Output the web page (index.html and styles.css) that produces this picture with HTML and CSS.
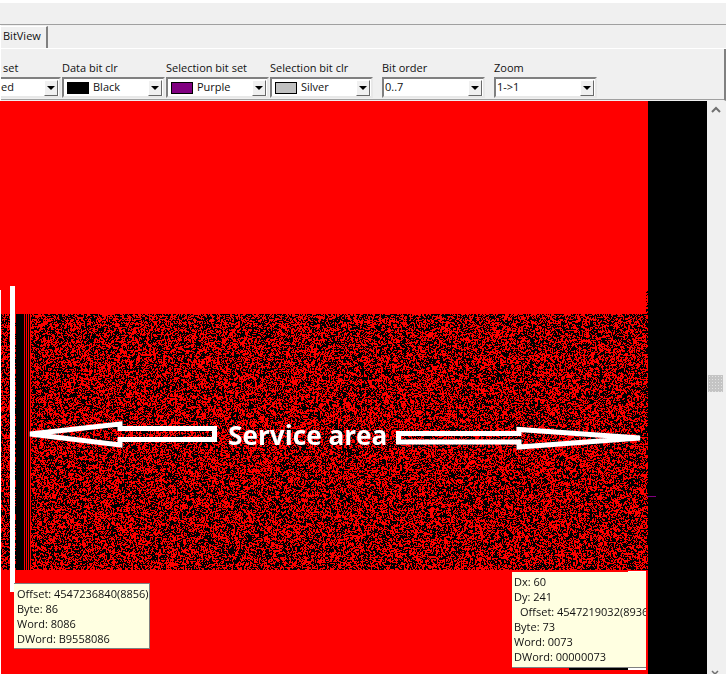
FILE: index.html
```html
<!DOCTYPE html>
<html lang="en">
<head>
<meta charset="utf-8">
<title>BitView</title>
<link rel="stylesheet" href="styles.css">
</head>
<body>
<div class="window">
  <div class="topgap"></div>
  <div class="menuband"></div>
  <div class="tabbar">
    <div class="tab">BitView</div>
  </div>
  <div class="toolbar">
    <div class="field f-set"><label>set</label><div class="combo"><span class="val clip">ed</span><span class="drop"><i></i></span></div></div>
    <div class="field f-a"><label>Data bit clr</label><div class="combo"><span class="swatch black"></span><span class="val">Black</span><span class="drop"><i></i></span></div></div>
    <div class="field f-a"><label>Selection bit set</label><div class="combo"><span class="swatch purple"></span><span class="val">Purple</span><span class="drop"><i></i></span></div></div>
    <div class="field f-b"><label>Selection bit clr</label><div class="combo"><span class="swatch silver"></span><span class="val">Silver</span><span class="drop"><i></i></span></div></div>
    <div class="field f-b"><label>Bit order</label><div class="combo"><span class="val plain">0..7</span><span class="drop"><i></i></span></div></div>
    <div class="field f-b"><label>Zoom</label><div class="combo"><span class="val plain">1-&gt;1</span><span class="drop"><i></i></span></div></div>
  </div>
  <div class="view">
    <div class="bitmap">
      <div class="red top"></div>
      <canvas id="noise" class="noise" width="648" height="280"></canvas>
      <div class="red bottom"></div>
    </div>
    <div class="blackcol"></div>
    <div class="scrollbar">
      <svg class="up" width="12" height="8" viewBox="0 0 12 8"><path d="M2 6 L6 2 L10 6" fill="none" stroke="#707070" stroke-width="2"/></svg>
      <div class="thumb"></div>
      <svg class="down" width="12" height="8" viewBox="0 0 12 8"><path d="M2 1 L5 4 L8 1" fill="none" stroke="#707070" stroke-width="1.5"/></svg>
    </div>

    <div class="edge"></div>
    <div class="marker"></div>
    <div class="tick"></div>
    <svg class="arrows" width="648" height="60" viewBox="0 0 648 60">
      <path d="M30 20 L120 10 L120 14.5 L214.5 14.5 L214.5 25.5 L120 25.5 L120 31 Z" fill="none" stroke="#fff" stroke-width="5"/>
      <path d="M398.5 19.5 L519 19.5 L519 15.5 L640 24 L519 33 L519 28 L398.5 28 Z" fill="none" stroke="#fff" stroke-width="5"/>
    </svg>
    <div class="label">Service area</div>
    <div class="tip tip-left">Offset: 4547236840(8856)<br>Byte: 86<br>Word: 8086<br>DWord: B9558086</div>
    <div class="tip tip-right">Dx: 60<br>Dy: 241<br><span class="indent">Offset: 4547219032(8936</span><br>Byte: 73<br>Word: 0073<br>DWord: 00000073</div>
    <div class="strip strip-white-top"></div>
    <div class="strip strip-black"></div>
    <div class="strip strip-white"></div>
  </div>
</div>
<script src="noise.js"></script>
</body>
</html>
```
FILE: styles.css
```css
html, body { margin: 0; padding: 0; }
body { width: 727px; height: 674px; overflow: hidden; background: #fff; font-family: "Open Sans", "Liberation Sans", Arial, sans-serif; }
.window { width: 726px; height: 674px; background: #f0f0f0; display: flex; flex-direction: column; position: relative; overflow: hidden; }
.topgap { height: 3px; background: #fff; }
.menuband { height: 21px; background: #f0f0f0; border-bottom: 1px solid #a0a0a0; }
.tabbar { height: 24px; box-sizing: border-box; border-bottom: 1px solid #fff; border-left: 1px solid #fff; display: flex; align-items: flex-end; }
.tab { width: 47px; height: 22px; box-sizing: border-box; background: #f0f0f0; border-top: 1px solid #fff; border-right: 2px solid #808080; padding: 1px 0 0 2px; font-size: 11px; line-height: 16px; color: #111; position: relative; }
.toolbar { height: 52px; display: flex; box-sizing: border-box; padding-top: 13px; border-left: 1px solid #fff; border-bottom: 1px solid #f0f0f0; box-shadow: inset 0 -1px 0 #a0a0a0; border-right: 2px solid #808080; }
.field { display: flex; flex-direction: column; flex: none; }
.field label { font-size: 11px; line-height: 13px; height: 15px; margin-top: -1px; margin-bottom: 1px; color: #111; white-space: nowrap; }
.f-set { width: 61px; }
.f-set label { padding-left: 2px; }
.f-a { width: 104px; }
.f-b { width: 112px; }
.combo { height: 21px; width: 103px; box-sizing: border-box; background: #fff; border: 2px solid; border-color: #808080 #e8e8e8 #e8e8e8 #808080; display: flex; align-items: center; position: relative; }
.f-set .combo { width: 60px; border-left: 0; }
.swatch { width: 22px; height: 12px; box-sizing: border-box; border: 1px solid #000; margin-left: 3px; flex: none; }
.swatch.black { background: #000; }
.swatch.purple { background: #800080; }
.swatch.silver { background: #c0c0c0; }
.val { font-size: 11px; line-height: 15px; color: #111; margin-left: 4px; margin-bottom: 2px; flex: 1; white-space: nowrap; }
.val.plain { margin-left: 1px; }
.val.clip { margin-left: 0; }
.drop { width: 14px; height: 16px; margin-right: 1px; flex: none; background: #f0f0f0; border: 1px solid; border-color: #fff #696969 #696969 #fff; box-sizing: border-box; display: flex; align-items: center; justify-content: center; }
.drop i { width: 0; height: 0; border-left: 4px solid transparent; border-right: 4px solid transparent; border-top: 4px solid #000; }
.view { position: relative; height: 573px; display: flex; }
.bitmap { width: 648px; height: 573px; display: flex; flex-direction: column; flex: none; background: #f00; }
.red.top { height: 189px; background: #f00; }
.noise { display: block; width: 648px; height: 280px; }
.red.bottom { flex: 1; background: #f00; }
.blackcol { width: 59px; height: 573px; background: #000; flex: none; }
.scrollbar { width: 19px; height: 573px; background: #f0f0f0; position: relative; flex: none; overflow: hidden; }
.up { display: block; margin: 5px 0 0 3px; }
.down { position: absolute; left: 3px; top: 569px; }
.thumb { position: absolute; left: 1px; top: 274px; width: 15px; height: 17px; background: #c4c4c4; background-image: radial-gradient(#e2e2e2 0.6px, transparent 0.7px); background-size: 3px 3px; }
.edge { position: absolute; left: 0; top: 189px; bottom: 0; width: 1px; background: #fff; }
.marker { position: absolute; left: 10px; top: 185px; width: 5px; height: 306px; background: #fff; }
.tick { position: absolute; left: 647px; top: 395px; width: 9px; height: 1px; background: #800080; }
.arrows { position: absolute; left: 0; top: 313px; }
.label { position: absolute; left: 228px; top: 317px; font-family: "Open Sans", sans-serif; font-weight: 700; font-size: 26.2px; line-height: 34px; color: #fff; white-space: nowrap; }
.tip { position: absolute; background: #ffffe1; font-size: 11px; line-height: 15px; color: #111; box-sizing: border-box; white-space: nowrap; overflow: hidden; }
.tip-left { left: 14px; top: 482px; width: 136px; height: 66px; padding: 2px 0 0 3px; border-top: 1px solid #808080; border-right: 1px solid #808080; border-bottom: 1px solid #808080; }
.tip-right { left: 512px; top: 471px; width: 134px; height: 96px; padding: 2px 0 0 2px; border-bottom: 1px solid #808080; }
.indent { padding-left: 6px; }
.strip { position: absolute; height: 2px; }
.strip-white-top { left: 628px; top: 470px; width: 18px; height: 1px; background: #fff; }
.strip-black { left: 569px; top: 567px; width: 59px; background: #000; }
.strip-white { left: 628px; top: 567px; width: 18px; background: #fff; }
```
FILE: noise.js
```js
(function () {
  var c = document.getElementById("noise");
  var ctx = c.getContext("2d");
  var W = c.width, H = c.height, TOP = 24;
  ctx.fillStyle = "#f00";
  ctx.fillRect(0, 0, W, H);
  var seed = 987654;
  function rnd() {
    seed ^= seed << 13; seed ^= seed >>> 17; seed ^= seed << 5; seed >>>= 0;
    return seed / 4294967296;
  }
  var prev = new Uint8Array(W), cur = new Uint8Array(W);
  ctx.fillStyle = "#000";
  for (var y = 0; y < H; y++) {
    for (var x = 0; x < W; x++) {
      var r = rnd(), v;
      if (r < 0.12 && x > 0) v = cur[x - 1];
      else if (r < 0.24) v = prev[x];
      else v = rnd() < 0.5 ? 1 : 0;
      cur[x] = v;
      // above the main block only the rightmost columns carry data
      var visible = y >= TOP || (x >= 646 && y > 0 && rnd() < 0.5);
      if (v && visible) ctx.fillRect(x, y, 1, 1);
    }
    var t = prev; prev = cur; cur = t;
  }
  // solid band and stripes near the left edge
  ctx.fillRect(16, TOP, 8, H - TOP);
  ctx.fillStyle = "#f00";
  ctx.fillRect(24, TOP, 7, H - TOP);
  ctx.fillStyle = "#000";
  ctx.fillRect(25, TOP, 1, H - TOP);
  ctx.fillRect(27, TOP, 1, H - TOP);
  ctx.fillRect(29, TOP, 1, H - TOP);
})();
```
